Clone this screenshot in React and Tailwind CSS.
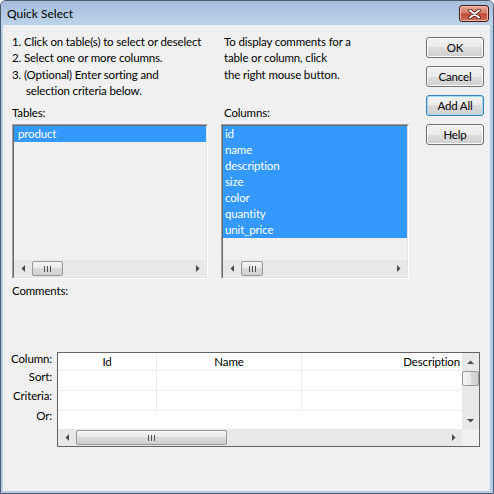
import React from 'react';

const Tri = ({ dir }) => {
  const horiz = dir === 'left' || dir === 'right';
  const pts = {
    left: '4,0 4,7 0.5,3.5',
    right: '0,0 0,7 3.5,3.5',
    up: '0,4 7,4 3.5,0.5',
    down: '0,0 7,0 3.5,3.5',
  }[dir];
  return (
    <svg width={horiz ? 4 : 7} height={horiz ? 7 : 4} viewBox={horiz ? '0 0 4 7' : '0 0 7 4'}>
      <polygon points={pts} fill="#4a4a4a" />
    </svg>
  );
};

const Grip = () => (
  <div className="flex gap-[2px]">
    <span className="block w-px h-[6px] bg-[#4f4f4f]" />
    <span className="block w-px h-[6px] bg-[#4f4f4f]" />
    <span className="block w-px h-[6px] bg-[#4f4f4f]" />
  </div>
);

const HScroll = ({ thumb }) => (
  <div className="h-[17px] flex items-center bg-[#e8e8e8]">
    <div className="w-[17px] h-full flex items-center justify-center">
      <Tri dir="left" />
    </div>
    <div className="flex-1 h-full flex items-center">
      <div
        className={`${thumb} h-[15px] rounded-[2px] border border-[#979797] bg-[linear-gradient(#f5f5f5,#e8e8e8_50%,#dadada_50%,#d0d0d0)] flex items-center justify-center`}
      >
        <Grip />
      </div>
    </div>
    <div className="w-[17px] h-full flex items-center justify-center">
      <Tri dir="right" />
    </div>
  </div>
);

const ListBox = ({ items, thumb, pad }) => (
  <div className="h-[155px] border border-t-[#a0a0a0] border-l-[#a0a0a0] border-b-white border-r-white">
    <div className="h-full flex flex-col border border-t-[#696969] border-l-[#696969] border-b-[#e3e3e3] border-r-[#e3e3e3]">
      <div className="flex-1 bg-[#f0f0f0]">
        {items.map((it) => (
          <div key={it} className={`h-[16px] leading-[16px] bg-[#3399ff] text-white ${pad}`}>
            {it}
          </div>
        ))}
      </div>
      <HScroll thumb={thumb} />
    </div>
  </div>
);

const Button = ({ label, focused }) => (
  <div
    className={`h-[21px] w-[58px] rounded-[3px] border flex items-center justify-center leading-none bg-[linear-gradient(#f2f2f2,#ebebeb_50%,#dddddd_50%,#cfcfcf)] ${
      focused
        ? 'border-[#3c7fb1] shadow-[inset_0_0_0_1px_#9ddcf7]'
        : 'border-[#707070] shadow-[inset_0_0_0_1px_#fbfbfb]'
    }`}
  >
    {label}
  </div>
);

const GridRow = ({ h, cells }) => (
  <div className={`flex ${h} border-b border-[#ececec]`}>
    <div className="w-[99px] border-r border-[#ececec] flex items-center justify-center">{cells[0]}</div>
    <div className="w-[145px] border-r border-[#ececec] flex items-center justify-center">{cells[1]}</div>
    <div className="flex-1 flex items-center justify-end pr-[2px]">{cells[2]}</div>
  </div>
);

export default function App() {
  return (
    <div className="w-[494px] h-[494px] bg-[#f0f0f0]">
      <div className="w-full h-full flex flex-col rounded-t-[6px] border border-[#4c5a6b] bg-[#b3cde8] font-['Lato','Noto_Sans',sans-serif] text-[11.5px] tracking-[-0.15px] text-black overflow-hidden whitespace-nowrap">
        {/* title bar */}
        <div className="h-[24px] shrink-0 flex items-start justify-between bg-gradient-to-b from-[#a4bddb] to-[#bdd3eb] pl-[6px] pr-[4px]">
          <span className="text-[12px] tracking-normal leading-[26px] text-black">Quick Select</span>
          <div className="mt-[4px] w-[30px] h-[17px] rounded-[3px] border border-[#4a1b14] bg-[linear-gradient(#e9a99a,#d37a68_45%,#c24a36_55%,#d0705c)] shadow-[inset_0_0_0_1px_#efb8ac] flex items-center justify-center">
            <svg width="13" height="10" viewBox="0 0 13 10">
              <path d="M2 1.5 L11 8.5 M11 1.5 L2 8.5" stroke="#5a2018" strokeWidth="3.6" strokeLinecap="round" />
              <path d="M2 1.5 L11 8.5 M11 1.5 L2 8.5" stroke="#ffffff" strokeWidth="2" strokeLinecap="round" />
            </svg>
          </div>
        </div>

        {/* client area */}
        <div className="flex-1 ml-[2px] mr-[3px] mb-[2px] bg-[#f0f0f0] flex flex-col pl-[9px] pt-[9px]">
          <div className="flex">
            <div className="w-[196px]">
              <div className="h-[71px] leading-[16.3px]">
                <div>1. Click on table(s) to select or deselect</div>
                <div>2. Select one or more columns.</div>
                <div>3. (Optional) Enter sorting and</div>
                <div className="pl-[14px]">selection criteria below.</div>
              </div>
              <div className="h-[16px] leading-[16px]">Tables:</div>
              <div className="mt-[3px]">
                <ListBox items={['product']} thumb="ml-px w-[31px]" pad="pl-[4px]" />
              </div>
            </div>

            <div className="ml-[13px] w-[188px]">
              <div className="h-[71px] leading-[16.3px] pl-[3px]">
                <div>To display comments for a</div>
                <div>table or column, click</div>
                <div>the right mouse button.</div>
              </div>
              <div className="h-[16px] leading-[16px] pl-[3px]">Columns:</div>
              <div className="mt-[3px]">
                <ListBox
                  items={['id', 'name', 'description', 'size', 'color', 'quantity', 'unit_price']}
                  thumb="ml-px w-[22px]"
                  pad="pl-[2px]"
                />
              </div>
            </div>

            <div className="ml-[17px] pt-[3px] flex flex-col gap-[8px]">
              <Button label="OK" />
              <Button label="Cancel" />
              <Button label="Add All" focused />
              <Button label="Help" />
            </div>
          </div>

          <div className="mt-[4px] h-[16px] leading-[16px]">Comments:</div>

          <div className="mt-[53px] flex items-start">
            <div className="w-[40px] -mt-px flex flex-col items-end leading-[16px]">
              <div className="h-[18px]">Column:</div>
              <div className="h-[19px]">Sort:</div>
              <div className="h-[20px]">Criteria:</div>
              <div className="h-[16px]">Or:</div>
            </div>
            <div className="ml-[5px] w-[423px] border border-[#646464] flex flex-col">
              <div className="flex h-[76px]">
                <div className="flex-1 bg-white flex flex-col">
                  <GridRow h="h-[18px]" cells={['Id', 'Name', 'Description']} />
                  <GridRow h="h-[20px]" cells={['', '', '']} />
                  <GridRow h="h-[20px]" cells={['', '', '']} />
                  <div className="flex-1" />
                </div>
                <div className="w-[17px] bg-[#e8e8e8] flex flex-col">
                  <div className="h-[17px] flex items-center justify-center">
                    <Tri dir="up" />
                  </div>
                  <div className="mt-px h-[15px] rounded-[2px] border border-[#979797] bg-[linear-gradient(90deg,#f5f5f5,#e8e8e8_50%,#dadada_50%,#d0d0d0)]" />
                  <div className="flex-1" />
                  <div className="h-[17px] flex items-center justify-center">
                    <Tri dir="down" />
                  </div>
                </div>
              </div>
              <div className="flex">
                <div className="flex-1">
                  <HScroll thumb="ml-px w-[151px]" />
                </div>
                <div className="w-[17px] h-[17px] bg-[#f0f0f0]" />
              </div>
            </div>
          </div>
        </div>
      </div>
    </div>
  );
}
